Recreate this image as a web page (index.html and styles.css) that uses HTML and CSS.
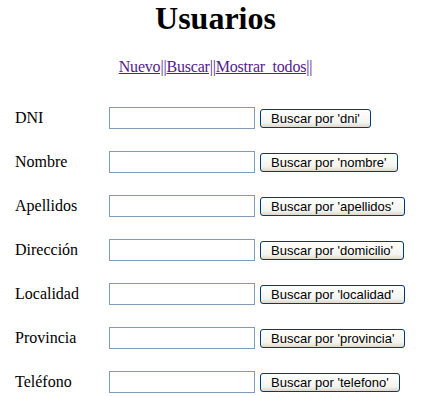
FILE: index.html
```html
<!DOCTYPE html>
<html lang="es">
<head>
    <meta charset="UTF-8">
    <title>Usuarios</title>
    <link rel="stylesheet" href="styles.css">
</head>
<body>
    <h1>Usuarios</h1>
    <p class="menu"><a href="#">Nuevo||</a><a href="#">Buscar||</a><a href="#">Mostrar&nbsp; todos||</a></p>
    <div class="search">
        <div class="row">
            <span class="label">DNI</span>
            <input type="text">
            <button>Buscar por 'dni'</button>
        </div>
        <div class="row">
            <span class="label">Nombre</span>
            <input type="text">
            <button>Buscar por 'nombre'</button>
        </div>
        <div class="row">
            <span class="label">Apellidos</span>
            <input type="text">
            <button>Buscar por 'apellidos'</button>
        </div>
        <div class="row">
            <span class="label">Dirección</span>
            <input type="text">
            <button>Buscar por 'domicilio'</button>
        </div>
        <div class="row">
            <span class="label">Localidad</span>
            <input type="text">
            <button>Buscar por 'localidad'</button>
        </div>
        <div class="row">
            <span class="label">Provincia</span>
            <input type="text">
            <button>Buscar por 'provincia'</button>
        </div>
        <div class="row">
            <span class="label">Teléfono</span>
            <input type="text">
            <button>Buscar por 'telefono'</button>
        </div>
    </div>
</body>
</html>
```

FILE: styles.css
```css
body {
    margin: 0;
    font-family: "Liberation Serif", "Times New Roman", serif;
    font-size: 16px;
    color: black;
    background: white;
}
h1 {
    margin: 0;
    font-size: 32px;
    line-height: 37px;
    text-align: center;
}
.menu {
    margin: 21px 0 0;
    line-height: 18px;
    text-align: center;
    letter-spacing: -0.2px;
}
.menu a {
    color: #551a8b;
}
.search {
    padding: 20px 0 0 15px;
}
.row {
    display: flex;
    align-items: center;
    height: 44px;
}
.label {
    width: 94px;
}
input {
    box-sizing: border-box;
    width: 146px;
    height: 22px;
    margin: 0 5px 0 0;
    border: 1px solid #7f9db9;
    padding: 1px 2px;
}
button {
    box-sizing: border-box;
    height: 19px;
    padding: 0 10px;
    border: 1px solid #003c74;
    border-radius: 3px;
    background: linear-gradient(#ffffff, #f4f3ee 75%, #dcd7cb);
    font-family: "Liberation Sans", Arial, sans-serif;
    font-size: 13px;
    line-height: 17px;
    color: black;
}
```
